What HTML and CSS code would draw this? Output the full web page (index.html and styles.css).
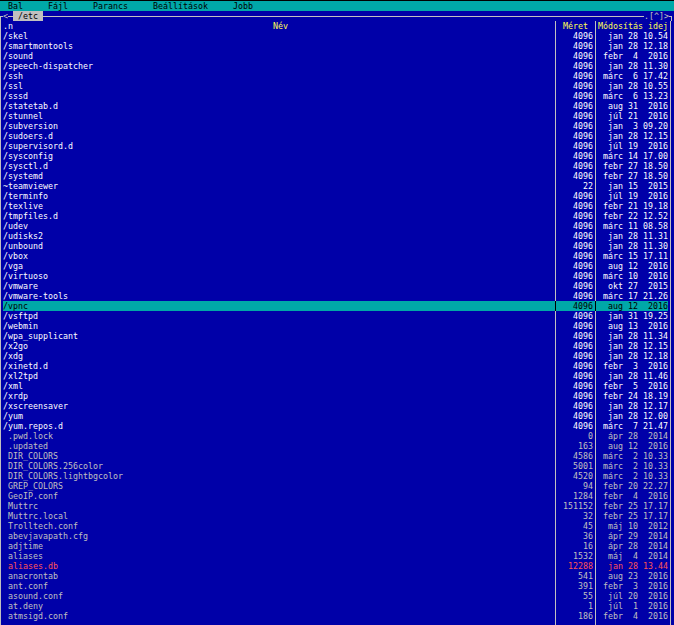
FILE: index.html
```html
<!DOCTYPE html>
<html lang="hu">
<head>
<meta charset="utf-8">
<title>mc - /etc</title>
<link rel="stylesheet" href="styles.css">
</head>
<body>
<div class="screen">
  <div class="menubar"><span>Bal</span><span>Fájl</span><span>Parancs</span><span>Beállítások</span><span>Jobb</span></div>
  <div class="topline">
    <span class="corner-tl"></span>
    <span class="ch">&lt;</span>
    <span class="hline w1"></span>
    <span class="path"> /etc </span>
    <span class="hline fill"></span>
    <span class="ch">.</span><span class="ch">[</span><span class="ch">^</span><span class="ch">]</span><span class="ch">&gt;</span>
    <span class="corner-tr"></span>
  </div>
  <div class="row head">
    <span class="vl"></span>
    <span class="name"><span class="sort">.n</span><span class="title">Név</span></span>
    <span class="vl"></span>
    <span class="size center">Méret</span>
    <span class="vl"></span>
    <span class="date">Módosítás idej</span>
    <span class="vl"></span>
  </div>

  <div class="row dir"><span class="vl"></span><span class="name">/skel</span><span class="vl"></span><span class="size">4096</span><span class="vl"></span><span class="date">jan 28 10.54</span><span class="vl"></span></div>
  <div class="row dir"><span class="vl"></span><span class="name">/smartmontools</span><span class="vl"></span><span class="size">4096</span><span class="vl"></span><span class="date">jan 28 12.18</span><span class="vl"></span></div>
  <div class="row dir"><span class="vl"></span><span class="name">/sound</span><span class="vl"></span><span class="size">4096</span><span class="vl"></span><span class="date">febr  4  2016</span><span class="vl"></span></div>
  <div class="row dir"><span class="vl"></span><span class="name">/speech-dispatcher</span><span class="vl"></span><span class="size">4096</span><span class="vl"></span><span class="date">jan 28 11.30</span><span class="vl"></span></div>
  <div class="row dir"><span class="vl"></span><span class="name">/ssh</span><span class="vl"></span><span class="size">4096</span><span class="vl"></span><span class="date">márc  6 17.42</span><span class="vl"></span></div>
  <div class="row dir"><span class="vl"></span><span class="name">/ssl</span><span class="vl"></span><span class="size">4096</span><span class="vl"></span><span class="date">jan 28 10.55</span><span class="vl"></span></div>
  <div class="row dir"><span class="vl"></span><span class="name">/sssd</span><span class="vl"></span><span class="size">4096</span><span class="vl"></span><span class="date">márc  6 13.23</span><span class="vl"></span></div>
  <div class="row dir"><span class="vl"></span><span class="name">/statetab.d</span><span class="vl"></span><span class="size">4096</span><span class="vl"></span><span class="date">aug 31  2016</span><span class="vl"></span></div>
  <div class="row dir"><span class="vl"></span><span class="name">/stunnel</span><span class="vl"></span><span class="size">4096</span><span class="vl"></span><span class="date">júl 21  2016</span><span class="vl"></span></div>
  <div class="row dir"><span class="vl"></span><span class="name">/subversion</span><span class="vl"></span><span class="size">4096</span><span class="vl"></span><span class="date">jan  3 09.20</span><span class="vl"></span></div>
  <div class="row dir"><span class="vl"></span><span class="name">/sudoers.d</span><span class="vl"></span><span class="size">4096</span><span class="vl"></span><span class="date">jan 28 12.15</span><span class="vl"></span></div>
  <div class="row dir"><span class="vl"></span><span class="name">/supervisord.d</span><span class="vl"></span><span class="size">4096</span><span class="vl"></span><span class="date">júl 19  2016</span><span class="vl"></span></div>
  <div class="row dir"><span class="vl"></span><span class="name">/sysconfig</span><span class="vl"></span><span class="size">4096</span><span class="vl"></span><span class="date">márc 14 17.00</span><span class="vl"></span></div>
  <div class="row dir"><span class="vl"></span><span class="name">/sysctl.d</span><span class="vl"></span><span class="size">4096</span><span class="vl"></span><span class="date">febr 27 18.50</span><span class="vl"></span></div>
  <div class="row dir"><span class="vl"></span><span class="name">/systemd</span><span class="vl"></span><span class="size">4096</span><span class="vl"></span><span class="date">febr 27 18.50</span><span class="vl"></span></div>
  <div class="row dir"><span class="vl"></span><span class="name">~teamviewer</span><span class="vl"></span><span class="size">22</span><span class="vl"></span><span class="date">jan 15  2015</span><span class="vl"></span></div>
  <div class="row dir"><span class="vl"></span><span class="name">/terminfo</span><span class="vl"></span><span class="size">4096</span><span class="vl"></span><span class="date">júl 19  2016</span><span class="vl"></span></div>
  <div class="row dir"><span class="vl"></span><span class="name">/texlive</span><span class="vl"></span><span class="size">4096</span><span class="vl"></span><span class="date">febr 21 19.18</span><span class="vl"></span></div>
  <div class="row dir"><span class="vl"></span><span class="name">/tmpfiles.d</span><span class="vl"></span><span class="size">4096</span><span class="vl"></span><span class="date">febr 22 12.52</span><span class="vl"></span></div>
  <div class="row dir"><span class="vl"></span><span class="name">/udev</span><span class="vl"></span><span class="size">4096</span><span class="vl"></span><span class="date">márc 11 08.58</span><span class="vl"></span></div>
  <div class="row dir"><span class="vl"></span><span class="name">/udisks2</span><span class="vl"></span><span class="size">4096</span><span class="vl"></span><span class="date">jan 28 11.31</span><span class="vl"></span></div>
  <div class="row dir"><span class="vl"></span><span class="name">/unbound</span><span class="vl"></span><span class="size">4096</span><span class="vl"></span><span class="date">jan 28 11.30</span><span class="vl"></span></div>
  <div class="row dir"><span class="vl"></span><span class="name">/vbox</span><span class="vl"></span><span class="size">4096</span><span class="vl"></span><span class="date">márc 15 17.11</span><span class="vl"></span></div>
  <div class="row dir"><span class="vl"></span><span class="name">/vga</span><span class="vl"></span><span class="size">4096</span><span class="vl"></span><span class="date">aug 12  2016</span><span class="vl"></span></div>
  <div class="row dir"><span class="vl"></span><span class="name">/virtuoso</span><span class="vl"></span><span class="size">4096</span><span class="vl"></span><span class="date">márc 10  2016</span><span class="vl"></span></div>
  <div class="row dir"><span class="vl"></span><span class="name">/vmware</span><span class="vl"></span><span class="size">4096</span><span class="vl"></span><span class="date">okt 27  2015</span><span class="vl"></span></div>
  <div class="row dir"><span class="vl"></span><span class="name">/vmware-tools</span><span class="vl"></span><span class="size">4096</span><span class="vl"></span><span class="date">márc 17 21.26</span><span class="vl"></span></div>
  <div class="row dir sel"><span class="vl"></span><span class="name">/vpnc</span><span class="vl"></span><span class="size">4096</span><span class="vl"></span><span class="date">aug 12  2016</span><span class="vl"></span></div>
  <div class="row dir"><span class="vl"></span><span class="name">/vsftpd</span><span class="vl"></span><span class="size">4096</span><span class="vl"></span><span class="date">jan 31 19.25</span><span class="vl"></span></div>
  <div class="row dir"><span class="vl"></span><span class="name">/webmin</span><span class="vl"></span><span class="size">4096</span><span class="vl"></span><span class="date">aug 13  2016</span><span class="vl"></span></div>
  <div class="row dir"><span class="vl"></span><span class="name">/wpa_supplicant</span><span class="vl"></span><span class="size">4096</span><span class="vl"></span><span class="date">jan 28 11.34</span><span class="vl"></span></div>
  <div class="row dir"><span class="vl"></span><span class="name">/x2go</span><span class="vl"></span><span class="size">4096</span><span class="vl"></span><span class="date">jan 28 12.15</span><span class="vl"></span></div>
  <div class="row dir"><span class="vl"></span><span class="name">/xdg</span><span class="vl"></span><span class="size">4096</span><span class="vl"></span><span class="date">jan 28 12.18</span><span class="vl"></span></div>
  <div class="row dir"><span class="vl"></span><span class="name">/xinetd.d</span><span class="vl"></span><span class="size">4096</span><span class="vl"></span><span class="date">febr  3  2016</span><span class="vl"></span></div>
  <div class="row dir"><span class="vl"></span><span class="name">/xl2tpd</span><span class="vl"></span><span class="size">4096</span><span class="vl"></span><span class="date">jan 28 11.46</span><span class="vl"></span></div>
  <div class="row dir"><span class="vl"></span><span class="name">/xml</span><span class="vl"></span><span class="size">4096</span><span class="vl"></span><span class="date">febr  5  2016</span><span class="vl"></span></div>
  <div class="row dir"><span class="vl"></span><span class="name">/xrdp</span><span class="vl"></span><span class="size">4096</span><span class="vl"></span><span class="date">febr 24 18.19</span><span class="vl"></span></div>
  <div class="row dir"><span class="vl"></span><span class="name">/xscreensaver</span><span class="vl"></span><span class="size">4096</span><span class="vl"></span><span class="date">jan 28 12.17</span><span class="vl"></span></div>
  <div class="row dir"><span class="vl"></span><span class="name">/yum</span><span class="vl"></span><span class="size">4096</span><span class="vl"></span><span class="date">jan 28 12.00</span><span class="vl"></span></div>
  <div class="row dir"><span class="vl"></span><span class="name">/yum.repos.d</span><span class="vl"></span><span class="size">4096</span><span class="vl"></span><span class="date">márc  7 21.47</span><span class="vl"></span></div>

  <div class="row file"><span class="vl"></span><span class="name"> .pwd.lock</span><span class="vl"></span><span class="size">0</span><span class="vl"></span><span class="date">ápr 28  2014</span><span class="vl"></span></div>
  <div class="row file"><span class="vl"></span><span class="name"> .updated</span><span class="vl"></span><span class="size">163</span><span class="vl"></span><span class="date">aug 12  2016</span><span class="vl"></span></div>
  <div class="row file"><span class="vl"></span><span class="name"> DIR_COLORS</span><span class="vl"></span><span class="size">4586</span><span class="vl"></span><span class="date">márc  2 10.33</span><span class="vl"></span></div>
  <div class="row file"><span class="vl"></span><span class="name"> DIR_COLORS.256color</span><span class="vl"></span><span class="size">5001</span><span class="vl"></span><span class="date">márc  2 10.33</span><span class="vl"></span></div>
  <div class="row file"><span class="vl"></span><span class="name"> DIR_COLORS.lightbgcolor</span><span class="vl"></span><span class="size">4520</span><span class="vl"></span><span class="date">márc  2 10.33</span><span class="vl"></span></div>
  <div class="row file"><span class="vl"></span><span class="name"> GREP_COLORS</span><span class="vl"></span><span class="size">94</span><span class="vl"></span><span class="date">febr 20 22.27</span><span class="vl"></span></div>
  <div class="row file"><span class="vl"></span><span class="name"> GeoIP.conf</span><span class="vl"></span><span class="size">1284</span><span class="vl"></span><span class="date">febr  4  2016</span><span class="vl"></span></div>
  <div class="row file"><span class="vl"></span><span class="name"> Muttrc</span><span class="vl"></span><span class="size">151152</span><span class="vl"></span><span class="date">febr 25 17.17</span><span class="vl"></span></div>
  <div class="row file"><span class="vl"></span><span class="name"> Muttrc.local</span><span class="vl"></span><span class="size">32</span><span class="vl"></span><span class="date">febr 25 17.17</span><span class="vl"></span></div>
  <div class="row file"><span class="vl"></span><span class="name"> Trolltech.conf</span><span class="vl"></span><span class="size">45</span><span class="vl"></span><span class="date">máj 10  2012</span><span class="vl"></span></div>
  <div class="row file"><span class="vl"></span><span class="name"> abevjavapath.cfg</span><span class="vl"></span><span class="size">36</span><span class="vl"></span><span class="date">ápr 29  2014</span><span class="vl"></span></div>
  <div class="row file"><span class="vl"></span><span class="name"> adjtime</span><span class="vl"></span><span class="size">16</span><span class="vl"></span><span class="date">ápr 28  2014</span><span class="vl"></span></div>
  <div class="row file"><span class="vl"></span><span class="name"> aliases</span><span class="vl"></span><span class="size">1532</span><span class="vl"></span><span class="date">máj  4  2014</span><span class="vl"></span></div>
  <div class="row file core"><span class="vl"></span><span class="name"> aliases.db</span><span class="vl"></span><span class="size">12288</span><span class="vl"></span><span class="date">jan 28 13.44</span><span class="vl"></span></div>
  <div class="row file"><span class="vl"></span><span class="name"> anacrontab</span><span class="vl"></span><span class="size">541</span><span class="vl"></span><span class="date">aug 23  2016</span><span class="vl"></span></div>
  <div class="row file"><span class="vl"></span><span class="name"> ant.conf</span><span class="vl"></span><span class="size">391</span><span class="vl"></span><span class="date">febr  3  2016</span><span class="vl"></span></div>
  <div class="row file"><span class="vl"></span><span class="name"> asound.conf</span><span class="vl"></span><span class="size">55</span><span class="vl"></span><span class="date">júl 20  2016</span><span class="vl"></span></div>
  <div class="row file"><span class="vl"></span><span class="name"> at.deny</span><span class="vl"></span><span class="size">1</span><span class="vl"></span><span class="date">júl  1  2016</span><span class="vl"></span></div>
  <div class="row file"><span class="vl"></span><span class="name"> atmsigd.conf</span><span class="vl"></span><span class="size">186</span><span class="vl"></span><span class="date">febr  4  2016</span><span class="vl"></span></div>
  <div class="row file"><span class="vl"></span><span class="name"></span><span class="vl"></span><span class="size"></span><span class="vl"></span><span class="date"></span><span class="vl"></span></div>
</div>
</body>
</html>
```

FILE: styles.css
```css
:root {
  --blue: #0000a8;
  --cyan: #00a8a8;
  --line: #c0c0c0;
  --gray: #c0c0c0;
  --white: #ffffff;
  --yellow: #ffff55;
  --red: #ff5555;
}

html {
  background: var(--blue);
}

body {
  margin: 0;
  padding-top: 1px;
  height: 624px;
  overflow: hidden;
  background: linear-gradient(#000, #000) no-repeat 0 0 / 100% 1px, var(--blue);
  font-family: "DejaVu Sans Mono", monospace;
  font-size: 8.3px;
  line-height: 10px;
  color: var(--gray);
}

.screen {
  margin-left: -2px;
  width: 676px;
}

.menubar {
  display: flex;
  gap: 25px;
  height: 10px;
  padding-left: 10px;
  background: var(--cyan);
  color: #000;
}

.topline {
  display: flex;
  height: 10px;
  white-space: pre;
}

.ch {
  width: 5px;
  flex: none;
  overflow: hidden;
  color: var(--line);
}

.hline {
  background: linear-gradient(var(--line), var(--line)) no-repeat 0 5px / 100% 1px;
}

.hline.w1 {
  width: 5px;
  flex: none;
}

.hline.fill {
  flex: 1;
}

.path {
  width: 30px;
  flex: none;
  background: var(--gray);
  color: #000;
}

.corner-tl,
.corner-tr {
  width: 5px;
  flex: none;
}

.corner-tl {
  background:
    linear-gradient(var(--line), var(--line)) no-repeat 2px 5px / 3px 1px,
    linear-gradient(var(--line), var(--line)) no-repeat 2px 5px / 1px 5px;
}

.corner-tr {
  background:
    linear-gradient(var(--line), var(--line)) no-repeat 0 5px / 3px 1px,
    linear-gradient(var(--line), var(--line)) no-repeat 2px 5px / 1px 5px;
}

.row {
  display: grid;
  grid-template-columns: 5px 550px 5px 35px 5px 70px 5px;
  height: 10px;
  white-space: pre;
}

.vl {
  background: linear-gradient(var(--line), var(--line)) no-repeat 2px 0 / 1px 100%;
}

.name {
  overflow: hidden;
}

.size,
.date {
  text-align: right;
  overflow: hidden;
}

.center {
  text-align: center;
}

.head {
  color: var(--yellow);
}

.head .name {
  display: grid;
  grid-template-columns: 1fr;
  padding-left: 5px;
}

.head .sort,
.head .title {
  grid-row: 1;
  grid-column: 1;
}

.head .sort {
  justify-self: start;
  margin-left: -5px;
  color: var(--white);
}

.head .title {
  justify-self: center;
}

.dir {
  color: var(--white);
}

.file {
  color: var(--gray);
}

.core {
  color: var(--red);
}

.sel .name,
.sel .size,
.sel .date {
  background: var(--cyan);
  color: #000;
}

.sel .vl:not(:first-child):not(:last-child) {
  background:
    linear-gradient(#000, #000) no-repeat 2px 0 / 1px 100%,
    var(--cyan);
}
```
